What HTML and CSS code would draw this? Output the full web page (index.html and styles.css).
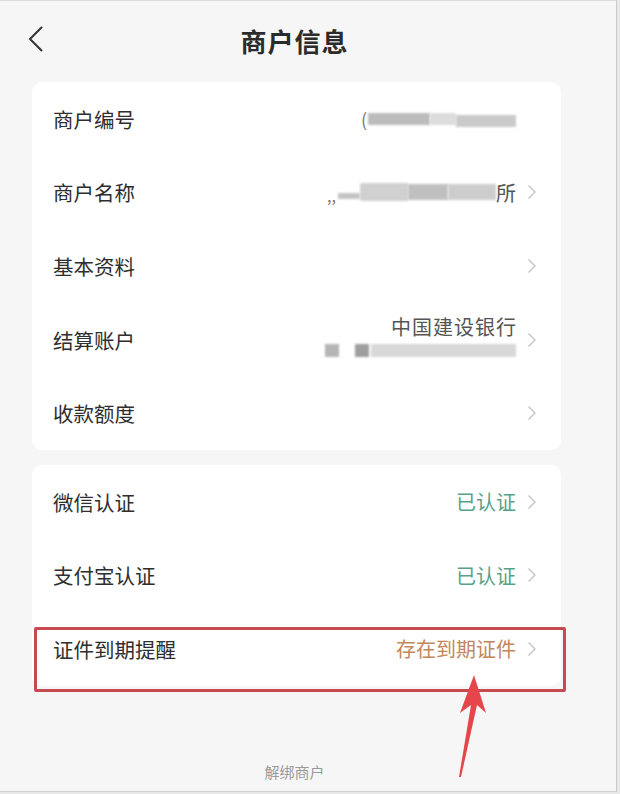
FILE: index.html
```html
<!DOCTYPE html>
<html lang="zh-CN">
<head>
<meta charset="utf-8">
<title>商户信息</title>
<link rel="stylesheet" href="styles.css">
</head>
<body>
<div class="screen">
  <div class="column">
    <header class="header">
      <svg class="back" width="16" height="26" viewBox="0 0 16 26"><polyline points="14,1 2,13 14,25" fill="none" stroke="#333" stroke-width="2"/></svg>
      <h1 class="title">商户信息</h1>
      <span></span>
    </header>

    <section class="card">
      <div class="row">
        <span class="label">商户编号</span>
        <span class="value">
          <span class="paren">(</span>
          <span class="blur b1"></span><span class="blur b2"></span><span class="blur b3"></span>
        </span>
        <span class="chev-space"></span>
      </div>
      <div class="row">
        <span class="label">商户名称</span>
        <span class="value">
          <span class="quote">,,</span>
          <span class="blur b4"></span><span class="blur b5"></span><span class="blur b6"></span><span class="blur b7"></span>
          <span class="tail">所</span>
        </span>
        <svg class="chev" width="10" height="16" viewBox="0 0 10 16"><polyline points="1.5,1.5 8,8 1.5,14.5" fill="none" stroke="#c2c2c2" stroke-width="1.3"/></svg>
      </div>
      <div class="row">
        <span class="label">基本资料</span>
        <span class="value"></span>
        <svg class="chev" width="10" height="16" viewBox="0 0 10 16"><polyline points="1.5,1.5 8,8 1.5,14.5" fill="none" stroke="#c2c2c2" stroke-width="1.3"/></svg>
      </div>
      <div class="row">
        <span class="label">结算账户</span>
        <span class="value stack">
          <span class="bank">中国建设银行</span>
          <span class="acct"><span class="blur sq"></span><span class="blur sq dark"></span><span class="blur b8"></span></span>
        </span>
        <svg class="chev" width="10" height="16" viewBox="0 0 10 16"><polyline points="1.5,1.5 8,8 1.5,14.5" fill="none" stroke="#c2c2c2" stroke-width="1.3"/></svg>
      </div>
      <div class="row">
        <span class="label">收款额度</span>
        <span class="value"></span>
        <svg class="chev" width="10" height="16" viewBox="0 0 10 16"><polyline points="1.5,1.5 8,8 1.5,14.5" fill="none" stroke="#c2c2c2" stroke-width="1.3"/></svg>
      </div>
    </section>

    <section class="card">
      <div class="row">
        <span class="label">微信认证</span>
        <span class="value ok">已认证</span>
        <svg class="chev" width="10" height="16" viewBox="0 0 10 16"><polyline points="1.5,1.5 8,8 1.5,14.5" fill="none" stroke="#c2c2c2" stroke-width="1.3"/></svg>
      </div>
      <div class="row">
        <span class="label">支付宝认证</span>
        <span class="value ok">已认证</span>
        <svg class="chev" width="10" height="16" viewBox="0 0 10 16"><polyline points="1.5,1.5 8,8 1.5,14.5" fill="none" stroke="#c2c2c2" stroke-width="1.3"/></svg>
      </div>
      <div class="row marked">
        <span class="label">证件到期提醒</span>
        <span class="value warn">存在到期证件</span>
        <svg class="chev" width="10" height="16" viewBox="0 0 10 16"><polyline points="1.5,1.5 8,8 1.5,14.5" fill="none" stroke="#c2c2c2" stroke-width="1.3"/></svg>
        <span class="highlight"></span>
      </div>
    </section>

    <div class="unbind">解绑商户</div>
  </div>

  <svg class="arrow" width="40" height="110" viewBox="0 0 40 110">
    <path d="M21 0 L33 38 L24 30 L8 102 L6 102 L18 30 L7 38 Z" fill="#e5464b"/>
  </svg>
</div>
</body>
</html>
```

FILE: styles.css
```css
* { box-sizing: border-box; }

html, body {
  margin: 0;
  padding: 0;
}

body {
  width: 620px;
  height: 794px;
  background: #e8e8e8;
  font-family: "Noto Sans CJK SC", "Noto Sans", sans-serif;
  color: #333;
  overflow: hidden;
}

.screen {
  position: relative;
  width: 617px;
  height: 792px;
  background: #f6f6f6;
  border-top: 1px solid #dcdcdc;
  border-right: 1px solid #c9c9c9;
  border-bottom: 1px solid #cfcfcf;
}

.column {
  margin-left: 32px;
  width: 529px;
  display: flex;
  flex-direction: column;
}

.header {
  height: 81px;
  display: grid;
  grid-template-columns: 1fr auto 1fr;
  align-items: center;
  padding-bottom: 2px;
}

.back {
  margin-left: -4px;
  margin-top: -3px;
}

.title {
  margin: 0 0 0 -4px;
  font-size: 26px;
  font-weight: 700;
  color: #2b2b2b;
  letter-spacing: 1px;
}

.card {
  background: #fff;
  border-radius: 10px;
  margin-bottom: 15px;
}

.row {
  height: 73.6px;
  display: flex;
  align-items: center;
  padding: 0 24px 0 21px;
  gap: 11px;
}

.label {
  font-size: 20.5px;
  color: #2e2e2e;
  white-space: nowrap;
}

.value {
  flex: 1;
  display: flex;
  justify-content: flex-end;
  align-items: center;
  font-size: 20px;
  color: #555;
  white-space: nowrap;
}

.chev { flex: none; }
.chev-space { width: 10px; flex: none; }

.ok { color: #5a9f88; }
.warn { color: #c2875a; }

.paren { color: #777; font-size: 18px; margin-right: 1px; }
.quote { color: #777; font-size: 16px; margin-top: 6px; margin-right: 2px; }
.tail { color: #555; }

.blur {
  display: inline-block;
  filter: blur(1.2px);
}
.b1 { width: 62px; height: 12px; background: #bcbcbc; }
.b2 { width: 26px; height: 12px; background: #dcdcdc; }
.b3 { width: 60px; height: 12px; background: #cacaca; margin-top: 4px; }
.b4 { width: 22px; height: 6px; background: #c4c4c4; margin-top: 8px; }
.b5 { width: 48px; height: 18px; background: #d0d0d0; }
.b6 { width: 40px; height: 16px; background: #c0c0c0; }
.b7 { width: 48px; height: 16px; background: #cdcdcd; }

.stack {
  flex-direction: column;
  align-items: flex-end;
  gap: 6px;
  margin-top: -6px;
}
.bank { color: #555; font-size: 20px; line-height: 22px; letter-spacing: 1px; margin-right: -1px; }
.acct { display: flex; align-items: center; gap: 16px; }
.sq { width: 14px; height: 13px; background: #b5b5b5; }
.sq.dark { background: #9e9e9e; margin-right: -14px; }
.b8 { width: 145px; height: 13px; background: #d8d8d8; }

.marked { position: relative; }

.highlight {
  position: absolute;
  left: 2px;
  right: -5px;
  top: 15px;
  height: 65px;
  border: 3px solid #c74a53;
  border-radius: 2px;
  pointer-events: none;
}

.unbind {
  margin-top: 60px;
  margin-left: -4px;
  text-align: center;
  font-size: 15px;
  color: #9a9a9a;
}

.arrow {
  position: absolute;
  left: 453px;
  top: 674px;
}
```
